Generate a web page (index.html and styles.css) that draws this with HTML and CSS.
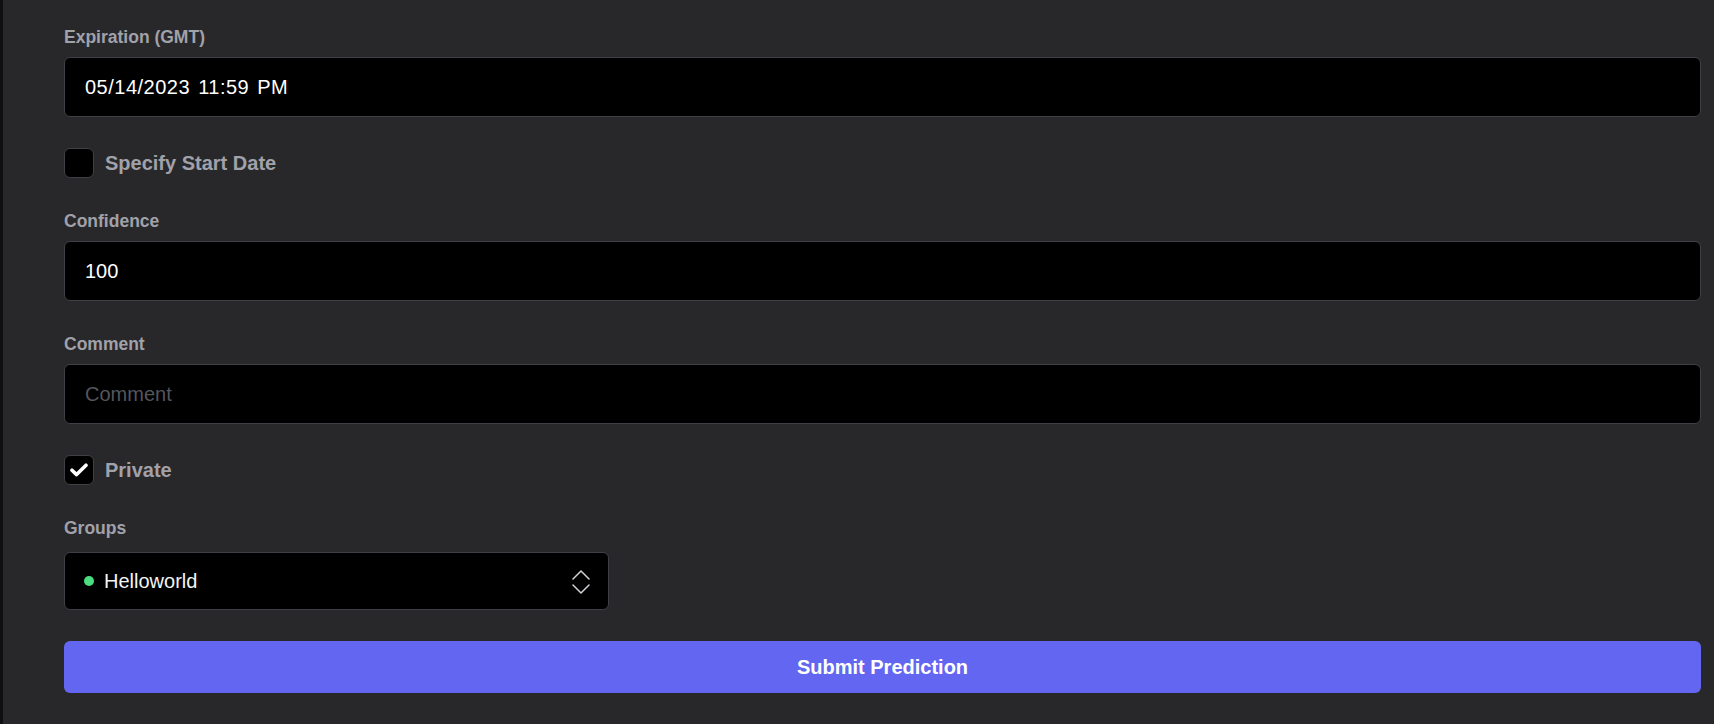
FILE: index.html
```html
<!DOCTYPE html>
<html lang="en">
<head>
<meta charset="utf-8">
<title>Prediction form</title>
<link rel="stylesheet" href="styles.css">
</head>
<body>
<div class="page">
  <div class="strip"></div>
  <form class="form">
    <div class="field">
      <label class="field-label">Expiration (GMT)</label>
      <input class="input input-date" type="text" value="05/14/2023 11:59 PM">
    </div>

    <div class="check-row">
      <span class="box"></span>
      <span class="check-label">Specify Start Date</span>
    </div>

    <div class="field">
      <label class="field-label">Confidence</label>
      <input class="input" type="text" value="100">
    </div>

    <div class="field">
      <label class="field-label">Comment</label>
      <input class="input" type="text" placeholder="Comment">
    </div>

    <div class="check-row">
      <span class="box">
        <svg class="tick" width="18" height="14" viewBox="0 0 18 14" aria-hidden="true">
          <path d="M2 7.2 L6.6 11.6 L16 2.2" fill="none" stroke="#fff" stroke-width="3.6" stroke-linecap="round" stroke-linejoin="round"/>
        </svg>
      </span>
      <span class="check-label">Private</span>
    </div>

    <div class="field field-groups">
      <label class="field-label">Groups</label>
      <div class="select">
        <span class="dot"></span>
        <span class="select-text">Helloworld</span>
        <svg class="updown" width="18" height="24" viewBox="0 0 18 24" aria-hidden="true">
          <path d="M1 9 L9 1 L17 9" fill="none" stroke="#d4d4d8" stroke-width="1.5" stroke-linecap="round" stroke-linejoin="round"/>
          <path d="M1 15 L9 23 L17 15" fill="none" stroke="#d4d4d8" stroke-width="1.5" stroke-linecap="round" stroke-linejoin="round"/>
        </svg>
      </div>
    </div>

    <button class="submit" type="button">Submit Prediction</button>
  </form>
</div>
</body>
</html>
```

FILE: styles.css
```css
html, body {
  margin: 0;
  padding: 0;
}

body {
  background: #28282b;
  font-family: "Liberation Sans", Arial, sans-serif;
}

.page {
  display: flex;
  min-height: 100vh;
}

.strip {
  width: 3px;
  flex: none;
  background: #0f0f11;
}

.form {
  flex: 1;
  display: flex;
  flex-direction: column;
  gap: 31px;
  padding: 25px 13px 0 61px;
  margin: 0;
}

.field {
  display: flex;
  flex-direction: column;
  gap: 7px;
}

.field-groups {
  gap: 11px;
}

.field-label {
  font-size: 17.5px;
  font-weight: 700;
  line-height: 25px;
  color: #a1a1aa;
}

.input {
  display: block;
  width: 100%;
  height: 60px;
  box-sizing: border-box;
  margin: 0;
  padding: 0 20px;
  border: 1px solid #3f3f46;
  border-radius: 6px;
  background: #000;
  color: #fff;
  font-family: "Liberation Sans", Arial, sans-serif;
  font-size: 20px;
  outline: none;
}

.input-date {
  letter-spacing: 0.5px;
  word-spacing: 2px;
}

.input::placeholder {
  color: #55555c;
}

.check-row {
  display: flex;
  align-items: center;
  gap: 11px;
  height: 30px;
}

.box {
  width: 30px;
  height: 30px;
  box-sizing: border-box;
  flex: none;
  border: 1px solid #3f3f46;
  border-radius: 6px;
  background: #000;
  display: flex;
  align-items: center;
  justify-content: center;
}

.check-label {
  font-size: 20px;
  font-weight: 700;
  color: #a1a1aa;
}

.select {
  width: 545px;
  height: 58px;
  box-sizing: border-box;
  border: 1px solid #3f3f46;
  border-radius: 6px;
  background: #000;
  display: flex;
  align-items: center;
  padding: 0 18px 0 19px;
}

.dot {
  width: 10px;
  height: 10px;
  border-radius: 50%;
  background: #4ade80;
  flex: none;
}

.select-text {
  flex: 1;
  margin-left: 10px;
  font-size: 20px;
  color: #f4f4f5;
}

.updown {
  flex: none;
  margin-top: 1px;
}

.submit {
  height: 52px;
  border: none;
  border-radius: 6px;
  background: #6366f1;
  color: #fff;
  font-family: "Liberation Sans", Arial, sans-serif;
  font-size: 20px;
  font-weight: 700;
  cursor: pointer;
}
```
